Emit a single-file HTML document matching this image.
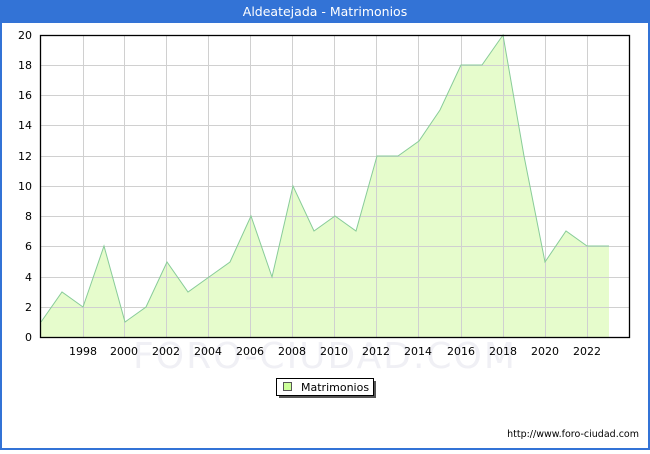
<!DOCTYPE html><html><head><meta charset="utf-8"><style>body{margin:0;width:650px;height:450px;overflow:hidden;font-family:"DejaVu Sans","Liberation Sans",sans-serif}</style></head><body>
<svg width="650" height="450" xmlns="http://www.w3.org/2000/svg" font-family="DejaVu Sans, Liberation Sans, sans-serif">
<rect x="0" y="0" width="650" height="450" fill="#fff"/>
<rect x="1" y="1" width="648" height="448" fill="none" stroke="#3373d6" stroke-width="2"/>
<rect x="0" y="0" width="650" height="23" fill="#3373d6"/>
<text x="325" y="16" text-anchor="middle" font-size="12.5" fill="#fff">Aldeatejada - Matrimonios</text>
<text x="325" y="368" text-anchor="middle" font-size="36" fill="#f0f0f5" letter-spacing="2">FORO-CIUDAD.COM</text>
<polygon fill="#e6fccc" points="41,337 41,322 62,292 83,307 104,246 125,322 146,307 167,262 188,292 209,277 230,262 251,216 272,277 293,186 314,231 335,216 356,231 377,156 398,156 419,141 440,110 461,65 482,65 503,35 524,156 545,262 566,231 587,246 609,246 609,337"/>
<g stroke="#d0d0d0" stroke-width="1">
<line x1="41" x2="630" y1="307.5" y2="307.5"/><line x1="41" x2="630" y1="277.5" y2="277.5"/><line x1="41" x2="630" y1="246.5" y2="246.5"/><line x1="41" x2="630" y1="216.5" y2="216.5"/><line x1="41" x2="630" y1="186.5" y2="186.5"/><line x1="41" x2="630" y1="156.5" y2="156.5"/><line x1="41" x2="630" y1="125.5" y2="125.5"/><line x1="41" x2="630" y1="95.5" y2="95.5"/><line x1="41" x2="630" y1="65.5" y2="65.5"/>
<line x1="83.5" x2="83.5" y1="35" y2="337"/><line x1="124.5" x2="124.5" y1="35" y2="337"/><line x1="166.5" x2="166.5" y1="35" y2="337"/><line x1="208.5" x2="208.5" y1="35" y2="337"/><line x1="250.5" x2="250.5" y1="35" y2="337"/><line x1="292.5" x2="292.5" y1="35" y2="337"/><line x1="334.5" x2="334.5" y1="35" y2="337"/><line x1="376.5" x2="376.5" y1="35" y2="337"/><line x1="418.5" x2="418.5" y1="35" y2="337"/><line x1="461.5" x2="461.5" y1="35" y2="337"/><line x1="503.5" x2="503.5" y1="35" y2="337"/><line x1="545.5" x2="545.5" y1="35" y2="337"/><line x1="587.5" x2="587.5" y1="35" y2="337"/>
</g>
<polyline fill="none" stroke="#88cc99" stroke-width="1" points="41,322 62,292 83,307 104,246 125,322 146,307 167,262 188,292 209,277 230,262 251,216 272,277 293,186 314,231 335,216 356,231 377,156 398,156 419,141 440,110 461,65 482,65 503,35 524,156 545,262 566,231 587,246 609,246"/>
<rect x="40.5" y="35.5" width="589" height="302" fill="none" stroke="#000" stroke-width="1.3"/>
<g font-size="11" fill="#000" text-anchor="end">
<text x="32" y="341">0</text><text x="32" y="311">2</text><text x="32" y="281">4</text><text x="32" y="250">6</text><text x="32" y="220">8</text><text x="32" y="190">10</text><text x="32" y="160">12</text><text x="32" y="129">14</text><text x="32" y="99">16</text><text x="32" y="69">18</text><text x="32" y="39">20</text>
</g>
<g font-size="11" fill="#000" text-anchor="middle">
<text x="83" y="355">1998</text><text x="124" y="355">2000</text><text x="166" y="355">2002</text><text x="208" y="355">2004</text><text x="250" y="355">2006</text><text x="292" y="355">2008</text><text x="334" y="355">2010</text><text x="376" y="355">2012</text><text x="418" y="355">2014</text><text x="461" y="355">2016</text><text x="503" y="355">2018</text><text x="545" y="355">2020</text><text x="587" y="355">2022</text>
</g>
<rect x="279" y="381" width="97" height="17" fill="#555"/>
<rect x="276.5" y="378.5" width="97" height="17" fill="#fff" stroke="#000" stroke-width="1"/>
<rect x="283.5" y="382.5" width="8" height="8" fill="#ccff99" stroke="#555"/>
<text x="301" y="391" font-size="11" fill="#000">Matrimonios</text>
<text x="639" y="437" text-anchor="end" font-size="9.5" fill="#000">http://www.foro-ciudad.com</text>
</svg>
</body></html>
